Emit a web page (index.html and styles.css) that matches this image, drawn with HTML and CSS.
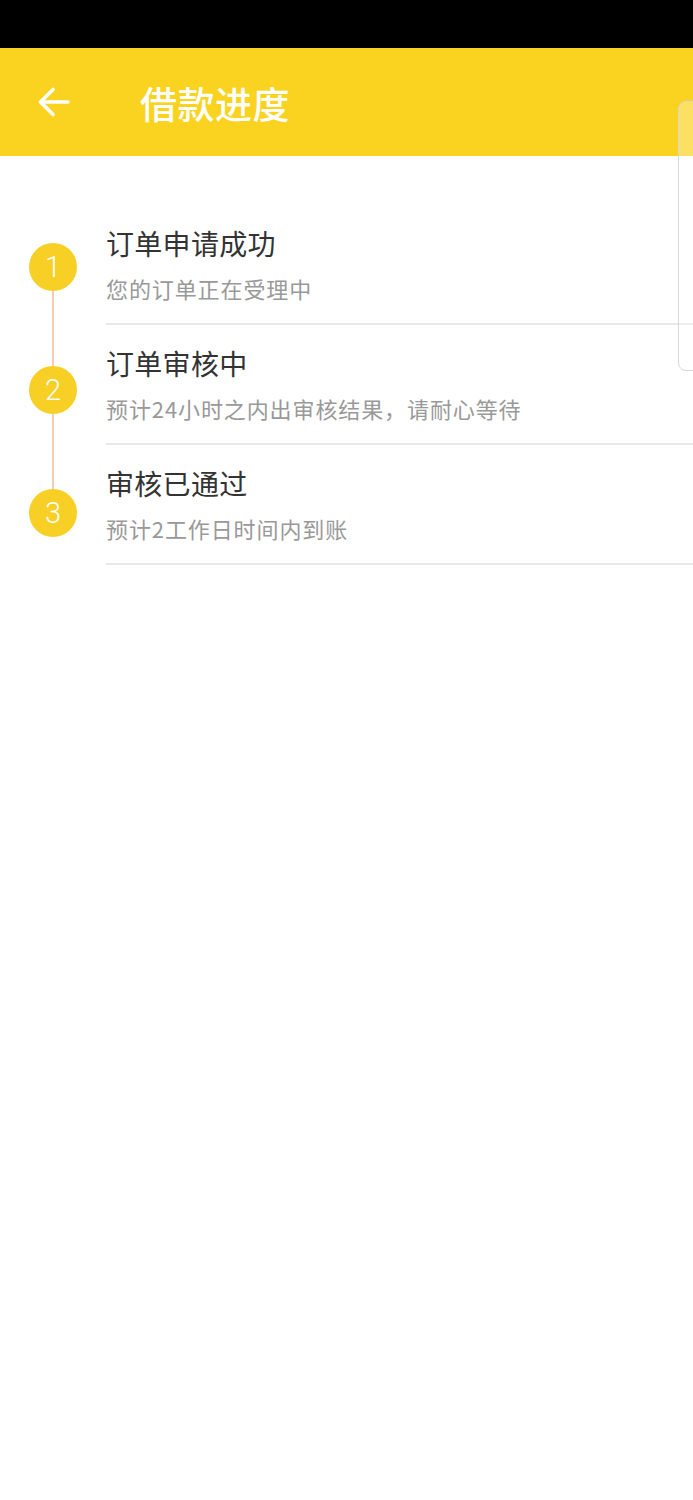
FILE: index.html
```html
<!DOCTYPE html>
<html lang="zh">
<head>
<meta charset="utf-8">
<link rel="stylesheet" href="styles.css">
</head>
<body>
<div class="status"></div>
<header class="bar">
  <svg class="back" width="34" height="30" viewBox="0 0 34 30"><path d="M31 15H4M16 2.5L3.5 15L16 27.5" fill="none" stroke="#fff" stroke-width="3.6" stroke-linecap="round" stroke-linejoin="round"/></svg>
  <h1 class="title">借款进度</h1>
</header>
<main class="steps">
  <div class="step">
    <div class="mark first"><span class="dot">1</span></div>
    <div class="body">
      <div class="name">订单申请成功</div>
      <div class="desc">您的订单正在受理中</div>
    </div>
  </div>
  <div class="step">
    <div class="mark mid"><span class="dot">2</span></div>
    <div class="body">
      <div class="name">订单审核中</div>
      <div class="desc">预计24小时之内出审核结果，请耐心等待</div>
    </div>
  </div>
  <div class="step">
    <div class="mark last"><span class="dot">3</span></div>
    <div class="body">
      <div class="name">审核已通过</div>
      <div class="desc">预计2工作日时间内到账</div>
    </div>
  </div>
</main>
<div class="panel"></div>
</body>
</html>
```
FILE: styles.css
```css
html, body { margin: 0; padding: 0; background: #fff; }
body { width: 693px; height: 1500px; position: relative; overflow: hidden;
  font-family: "Noto Sans CJK SC", "Noto Sans", Roboto, sans-serif; }
.status { height: 48px; background: #000; }
.bar { height: 108px; background: #F9D31F; display: flex; align-items: center; }
.back { margin-left: 37px; margin-top: -1px; flex: none; }
.title { margin: 2px 0 0 69px; color: #fff; font-size: 37px; font-weight: 500; line-height: 1; letter-spacing: 0.5px; }
.steps { padding-top: 49px; }
.step { display: flex; height: 120px; }
.mark { width: 106px; flex: none; position: relative; }
.mark::before { content: ""; position: absolute; left: 52px; width: 2px; background: #F4CBB5; top: 0; bottom: 0; }
.mark.first::before { top: 63px; }
.mark.last::before { bottom: auto; height: 50px; }
.dot { position: absolute; left: 29px; width: 48px; height: 48px; border-radius: 50%; background: #F8CF24;
  color: #fff; font-family: Roboto, sans-serif; font-weight: 300; font-size: 29px; line-height: 48px; text-align: center; }
.first .dot { top: 38px; }
.mid .dot { top: 41px; }
.last .dot { top: 44px; }
.body { flex: 1; border-bottom: 2px solid #e8e8e8; box-sizing: border-box; padding-top: 19px; }
.name { font-size: 28px; line-height: 38px; color: #333; letter-spacing: 0.3px; }
.desc { margin-top: 11px; font-size: 22px; line-height: 30px; color: #999; letter-spacing: 0.9px; }
.panel { position: absolute; left: 678px; top: 101px; width: 40px; height: 268px; border: 1px solid #d8d8d8;
  border-radius: 8px; background: rgba(255,255,255,0.3); }
```
